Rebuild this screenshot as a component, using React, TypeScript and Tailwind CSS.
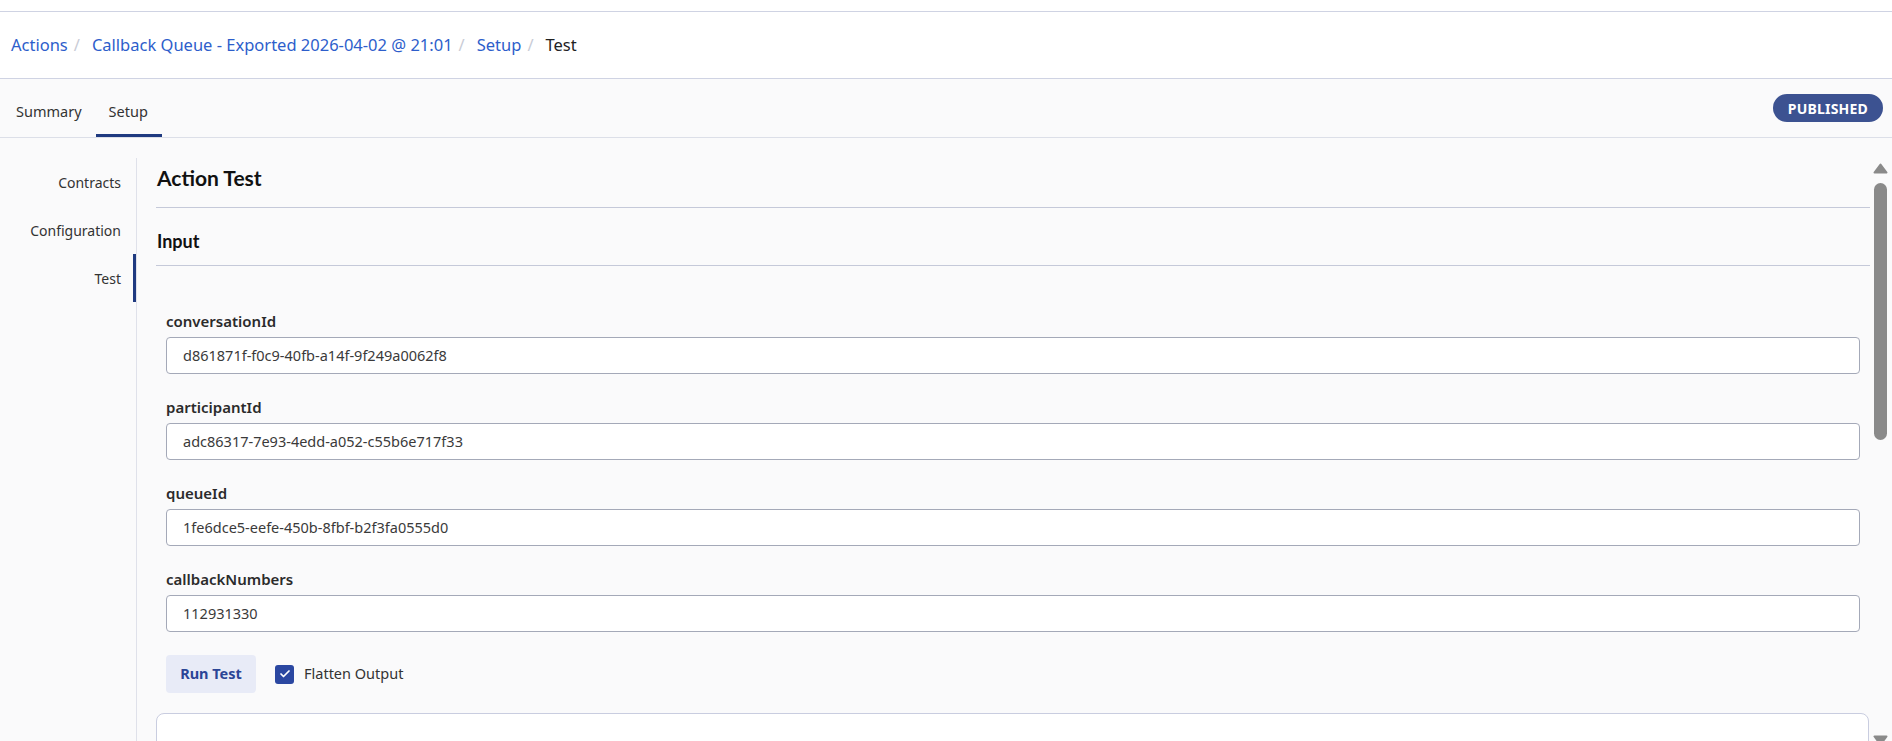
import { Check } from "lucide-react";

const crumbs = ["Actions", "Callback Queue - Exported 2026-04-02 @ 21:01", "Setup"];

const fields = [
  { label: "conversationId", value: "d861871f-f0c9-40fb-a14f-9f249a0062f8" },
  { label: "participantId", value: "adc86317-7e93-4edd-a052-c55b6e717f33" },
  { label: "queueId", value: "1fe6dce5-eefe-450b-8fbf-b2f3fa0555d0" },
  { label: "callbackNumbers", value: "112931330" },
];

const sideItems = ["Contracts", "Configuration", "Test"];

function Scrollbar() {
  return (
    <div className="w-[21px] flex flex-col items-center pt-[25px] pr-[3px]">
      <svg width="15" height="11" viewBox="0 0 15 11">
        <path d="M7.5 1.5 L13.5 9.5 L1.5 9.5 Z" fill="#8a8a8a" stroke="#8a8a8a" strokeWidth="2" strokeLinejoin="round" />
      </svg>
      <div className="mt-[9px] w-[13px] h-[257px] rounded-full bg-[#8a8a8a]" />
      <div className="mt-auto h-[6px] overflow-hidden">
        <svg width="15" height="11" viewBox="0 0 15 11">
          <path d="M1.5 1.5 L13.5 1.5 L7.5 9.5 Z" fill="#8a8a8a" stroke="#8a8a8a" strokeWidth="2" strokeLinejoin="round" />
        </svg>
      </div>
    </div>
  );
}

export default function App() {
  return (
    <div className="h-[741px] w-full overflow-hidden bg-[#fafafb] flex flex-col font-['Noto_Sans',sans-serif] text-[#333]">
      <div className="h-[12px] shrink-0 bg-white border-b border-[#cfd3e3]" />

      <nav className="h-[67px] shrink-0 bg-white border-b border-[#cfd3e3] flex items-center pl-[11px] text-[16.5px]">
        {crumbs.map((c) => (
          <span key={c} className="flex items-center">
            <span className="text-[#2d5ecb]">{c}</span>
            <span className="text-[#c9ccd6] ml-[6px] mr-[12px]">/</span>
          </span>
        ))}
        <span className="text-[#222]">Test</span>
      </nav>

      <div className="h-[59px] shrink-0 flex justify-between items-stretch border-b border-[#dcdfe8] pl-[2px] pr-[9px]">
        <div className="flex items-stretch text-[14.5px]">
          <div className="px-[14px] pt-[11px] border-b-[3px] border-transparent flex items-center text-[#333]">
            Summary
          </div>
          <div className="pl-[13px] pr-[14px] pt-[11px] border-b-[3px] border-[#1f3a80] flex items-center text-[#333]">
            Setup
          </div>
        </div>
        <div className="self-center h-[28px] px-[15px] rounded-full bg-[#3c5291] text-white text-[14px] font-bold flex items-center tracking-[0.2px]">
          PUBLISHED
        </div>
      </div>

      <div className="flex flex-1 min-h-0 overflow-hidden">
        <aside className="w-[137px] shrink-0 mt-[20px] border-r border-[#dfe1ea] text-[14px] text-[#333]">
          {sideItems.map((item) => (
            <div
              key={item}
              className={
                item === "Test"
                  ? "h-[48px] flex items-center justify-end pr-[12px] border-r-[3px] border-[#1f3a80]"
                  : "h-[48px] flex items-center justify-end pr-[15px]"
              }
            >
              {item}
            </div>
          ))}
        </aside>

        <main className="flex-1 min-w-0 pl-[19px] pr-[1px] pt-[20px] overflow-hidden">
          <div className="pt-[6px] pb-[15px] border-b border-[#c5c9d9]">
            <h1 className="font-['Lato',sans-serif] font-bold text-[21px] leading-[28px] text-[#111] pl-[1px]">
              Action Test
            </h1>
          </div>
          <div className="pt-[21px] pb-[12px] border-b border-[#c5c9d9]">
            <h2 className="font-['Lato',sans-serif] font-bold text-[18px] leading-[24px] text-[#111] pl-[1px]">
              Input
            </h2>
          </div>

          <div className="pt-[45px] px-[10px]">
            {fields.map((f) => (
              <div key={f.label} className="mb-[23px]">
                <label className="block h-[20px] leading-[20px] text-[15px] font-semibold text-[#2b2b2b] mb-[6px]">
                  {f.label}
                </label>
                <div className="h-[37px] bg-white border border-[#a4a9b8] rounded-[4px] flex items-center pl-[16px] text-[14.5px] text-[#3a3a3a]">
                  {f.value}
                </div>
              </div>
            ))}

            <div className="flex items-center">
              <button className="h-[38px] w-[90px] rounded-[4px] bg-[#e8ebf7] text-[#2b4596] text-[14.5px] font-bold">
                Run Test
              </button>
              <div className="ml-[19px] w-[19px] h-[19px] rounded-[3px] bg-[#2b47a1] flex items-center justify-center">
                <Check className="w-[12px] h-[12px] text-white" strokeWidth={3.5} />
              </div>
              <span className="ml-[10px] text-[14.5px] text-[#333]">Flatten Output</span>
            </div>
          </div>

          <div className="mt-[20px] h-[200px] mr-[1px] rounded-[8px] border border-[#c9cde0] bg-white" />
        </main>

        <Scrollbar />
      </div>
    </div>
  );
}
